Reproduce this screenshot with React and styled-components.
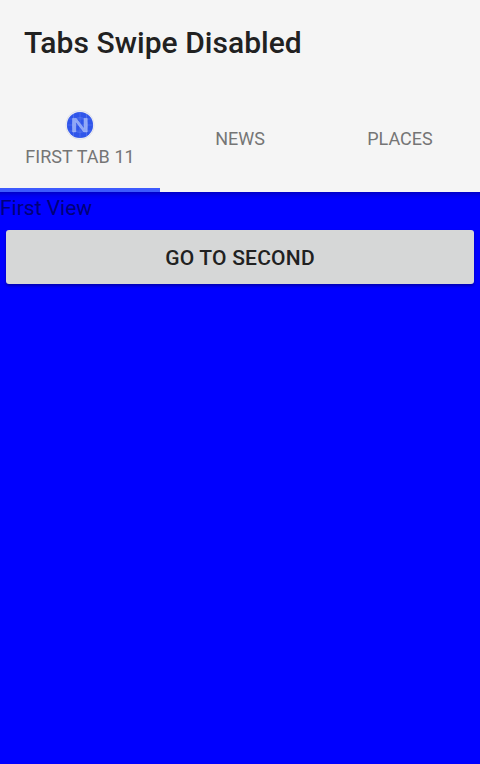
import React from "react";
import styled, { createGlobalStyle } from "styled-components";

const GlobalStyle = createGlobalStyle`
  * { box-sizing: border-box; }
  body { margin: 0; font-family: Roboto, "Liberation Sans", sans-serif; }
`;

const Screen = styled.div`
  display: flex;
  flex-direction: column;
  width: 480px;
  height: 764px;
  overflow: hidden;
  background: #0000ff;
`;

const Header = styled.header`
  flex: none;
  background: #f5f5f5;
`;

const Title = styled.h1`
  display: flex;
  align-items: center;
  height: 84px;
  margin: 0;
  padding: 2px 0 0 24px;
  color: #212121;
  font-size: 30px;
  font-weight: 500;
  letter-spacing: 0.04px;
  line-height: 36px;
  white-space: nowrap;
`;

const TabBar = styled.nav`
  display: grid;
  grid-template-columns: repeat(3, 1fr);
  height: 108px;
`;

const Tab = styled.button`
  display: flex;
  flex-direction: column;
  align-items: center;
  justify-content: center;
  gap: 6px;
  min-width: 0;
  margin: 0;
  padding: 6px 0 0;
  border: 0;
  border-bottom: 4px solid ${(p) => (p.$active ? "#3d5afe" : "transparent")};
  background: transparent;
  color: #757575;
  font: 400 18px/22px Roboto, "Liberation Sans", sans-serif;
  letter-spacing: ${(p) => (p.$active ? "0.06px" : "0")};
  white-space: nowrap;
`;

const TabIcon = styled.svg`
  display: block;
  width: 30px;
  height: 30px;
`;

const Content = styled.main`
  display: flex;
  flex: 1;
  flex-direction: column;
  background: linear-gradient(rgba(0, 0, 0, 0.22), rgba(0, 0, 0, 0.06) 4px, transparent 8px) #0000ff;
`;

const Label = styled.div`
  height: 32px;
  color: #000078;
  font-size: 21px;
  line-height: 32px;
`;

const ActionButton = styled.button`
  height: 54px;
  margin: 6px 6px 0;
  padding: 2px 0 0;
  border: 0;
  border-radius: 3px;
  background: #d6d7d7;
  box-shadow: 0 2px 3px rgba(0, 0, 0, 0.3);
  color: #212121;
  font: 500 21px/24px Roboto, "Liberation Sans", sans-serif;
  letter-spacing: 0.22px;
`;

function NativeIcon() {
  return (
    <TabIcon viewBox="0 0 30 30" aria-hidden="true">
      <circle cx="15" cy="15" r="14.4" fill="#d8d8e0" />
      <circle cx="15" cy="15" r="14" fill="#eceef6" />
      <circle cx="15" cy="15" r="13.1" fill="#2f55ea" />
      <g fill="none" stroke="#7895f3" strokeWidth="0.6" opacity="0.6">
        <circle cx="15" cy="15" r="7.5" />
        <path d="M8.5 4v22M21.5 4v22M3.5 9h23M3.5 21h23M15 2v26M2 15h26" />
      </g>
      <path
        d="M7.6 21.9V8.4h3.6l7.9 10.4V8.4h3.1v13.5h-3.5l-8-10.5v10.5z"
        fill="#8ea6f6"
        stroke="#b4c4fb"
        strokeWidth="0.5"
        strokeLinejoin="round"
      />
    </TabIcon>
  );
}

const tabs = [
  { label: "FIRST TAB 11", icon: true, active: true },
  { label: "NEWS" },
  { label: "PLACES" },
];

export default function App() {
  return (
    <Screen>
      <GlobalStyle />
      <Header>
        <Title>Tabs Swipe Disabled</Title>
        <TabBar>
          {tabs.map((tab) => (
            <Tab key={tab.label} $active={tab.active}>
              {tab.icon && <NativeIcon />}
              <span>{tab.label}</span>
            </Tab>
          ))}
        </TabBar>
      </Header>
      <Content>
        <Label>First View</Label>
        <ActionButton>GO TO SECOND</ActionButton>
      </Content>
    </Screen>
  );
}
